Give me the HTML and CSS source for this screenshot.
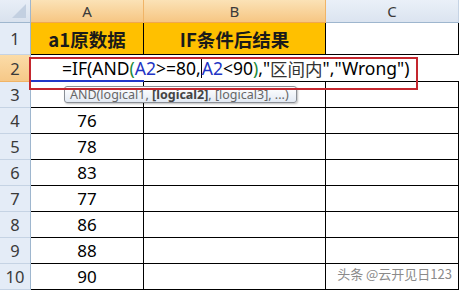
FILE: index.html
```html
<!DOCTYPE html>
<html lang="zh-CN">
<head>
    <meta charset="UTF-8">
    <meta name="viewport" content="width=device-width, initial-scale=1.0">
    <title>IF AND 区间判断</title>
    <link rel="stylesheet" href="styles.css">
</head>
<body>
    <div class="sheet">
        <div class="corner"><span class="corner-tri"></span></div>
        <div class="col-head sel">A</div>
        <div class="col-head sel">B</div>
        <div class="col-head">C</div>

        <div class="row-head">1</div>
        <div class="cell title">a1原数据</div>
        <div class="cell title">IF条件后结果</div>
        <div class="cell"></div>

        <div class="row-head sel">2</div>
        <div class="cell edit">=IF(AND<span class="paren">(</span><span class="ref">A2</span>&gt;=80,<span class="caret"></span><span class="ref">A2</span>&lt;90<span class="paren">)</span>,"<span class="cjk">区间内</span>","Wrong")</div>

        <div class="row-head">3</div>
        <div class="cell num"></div>
        <div class="cell"></div>
        <div class="cell"></div>

        <div class="row-head">4</div>
        <div class="cell num">76</div>
        <div class="cell"></div>
        <div class="cell"></div>

        <div class="row-head">5</div>
        <div class="cell num">78</div>
        <div class="cell"></div>
        <div class="cell"></div>

        <div class="row-head">6</div>
        <div class="cell num">83</div>
        <div class="cell"></div>
        <div class="cell"></div>

        <div class="row-head">7</div>
        <div class="cell num">77</div>
        <div class="cell"></div>
        <div class="cell"></div>

        <div class="row-head">8</div>
        <div class="cell num">86</div>
        <div class="cell"></div>
        <div class="cell"></div>

        <div class="row-head">9</div>
        <div class="cell num">88</div>
        <div class="cell"></div>
        <div class="cell"></div>

        <div class="row-head">10</div>
        <div class="cell num">90</div>
        <div class="cell"></div>
        <div class="cell"></div>

        <!-- overlays -->
        <div class="ref-underline"></div>
        <div class="tooltip">AND(logical1, <b>[logical2]</b>, [logical3], ...)</div>
        <div class="mark-box"></div>
        <div class="watermark">头条 @云开见日123</div>
    </div>
</body>
</html>
```

FILE: styles.css
```css
* {
    box-sizing: border-box;
}
body {
    margin: 0;
    width: 459px;
    height: 292px;
    overflow: hidden;
    background-color: #fff;
    font-family: 'Noto Sans', 'Noto Sans CJK SC', sans-serif;
    color: #000;
}
.sheet {
    position: relative;
    display: grid;
    grid-template-columns: 31px 113px 182px 133px;
    grid-template-rows: 23px 32px 27px repeat(8, 26px);
}
.corner {
    position: relative;
    background: linear-gradient(#e8eef7, #d9e2ee);
    border-right: 1px solid #9eb6ce;
    border-bottom: 1px solid #9eb6ce;
}
.corner-tri {
    position: absolute;
    right: 4px;
    bottom: 4px;
    width: 0;
    height: 0;
    border-left: 14px solid transparent;
    border-bottom: 14px solid #c3d0e1;
}
.col-head {
    display: flex;
    align-items: center;
    justify-content: center;
    font-size: 15px;
    color: #3a3a3a;
    background: linear-gradient(#eaf0f8, #dbe4f0);
    border-right: 1px solid #c5d3e4;
    border-bottom: 1px solid #9eb6ce;
}
.col-head.sel {
    background: linear-gradient(#fbe2b6, #f6c683);
    border-right-color: #f0b467;
    border-bottom-color: #f0a850;
}
.row-head {
    display: flex;
    align-items: center;
    justify-content: center;
    font-size: 16.5px;
    color: #3a3a3a;
    background-color: #e4ecf7;
    border-right: 1px solid #9eb6ce;
    border-bottom: 1px solid #c5d3e4;
}
.row-head.sel {
    background: linear-gradient(#fbdca8, #f6c888);
    border-bottom-color: #f0b467;
}
.cell {
    border-right: 1px solid #000;
    border-bottom: 1px solid #000;
    background-color: #fff;
}
.title {
    display: flex;
    align-items: center;
    justify-content: center;
    background-color: #ffc000;
    font-family: 'Noto Sans CJK SC', sans-serif;
    font-weight: 700;
    font-size: 18.5px;
    color: #1a1a1a;
}
.num {
    display: flex;
    align-items: center;
    justify-content: center;
    font-size: 17px;
}
.edit {
    grid-column: 2 / 5;
    border-right: none;
    padding-left: 31px;
    display: flex;
    align-items: center;
    font-size: 17.5px;
    white-space: nowrap;
}
.ref {
    color: #2233c4;
}
.paren {
    color: #1a8a3a;
}
.cjk {
    font-family: 'Noto Sans CJK SC', sans-serif;
    color: #333;
}
.caret {
    display: inline-block;
    width: 0;
    height: 20px;
    border-left: 1px solid #000;
}
.ref-underline {
    position: absolute;
    left: 31px;
    top: 80px;
    width: 113px;
    height: 2px;
    background-color: #2238c8;
}
.tooltip {
    position: absolute;
    left: 64px;
    top: 86px;
    width: 233px;
    height: 17px;
    padding-left: 5px;
    font-size: 12.5px;
    line-height: 15px;
    color: #666;
    white-space: nowrap;
    background: linear-gradient(#ffffff, #e3eaf4);
    border: 1px solid #8a8f96;
    border-radius: 3px;
    box-shadow: 1px 1px 2px rgba(0, 0, 0, 0.25);
}
.tooltip b {
    color: #444;
}
.mark-box {
    position: absolute;
    left: 29px;
    top: 57px;
    width: 389px;
    height: 33px;
    border: 2px solid #c4262e;
}
.watermark {
    position: absolute;
    right: 7px;
    bottom: 7px;
    font-family: 'Noto Sans CJK SC', sans-serif;
    font-size: 13px;
    color: #8a8a8a;
    text-shadow: 0 0 2px #fff;
}
```
